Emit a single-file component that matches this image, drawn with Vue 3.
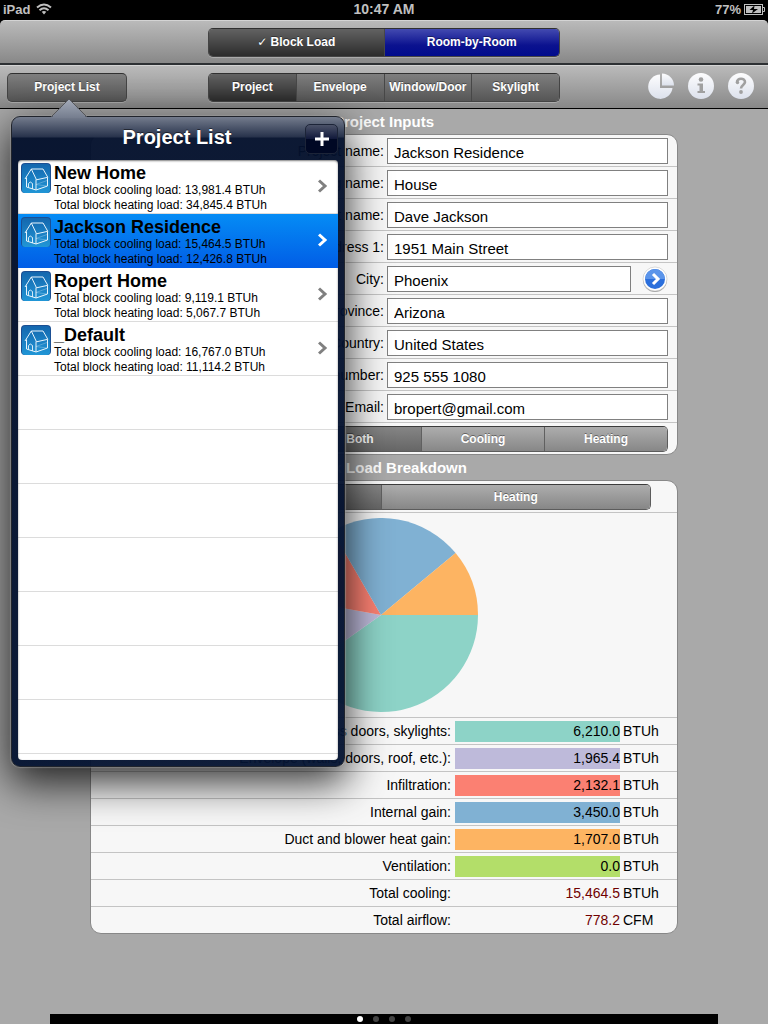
<script setup>
import { ref, computed } from 'vue'

const modes = ["Block Load", "Room-by-Room"]
const mode = ref("Block Load")

const tabs = ["Project", "Envelope", "Window/Door", "Skylight"]
const tab = ref("Project")

const projects = ref([
  {name: "New Home", cooling: "13,981.4", heating: "34,845.4"},
  {name: "Jackson Residence", cooling: "15,464.5", heating: "12,426.8"},
  {name: "Ropert Home", cooling: "9,119.1", heating: "5,067.7"},
  {name: "_Default", cooling: "16,767.0", heating: "11,114.2"},
])
const selected = ref("Jackson Residence")
const showList = ref(true)

const fields = ref([
  {id: "project", label: "Project name:", value: "Jackson Residence"},
  {id: "building", label: "Building name:", value: "House"},
  {id: "client", label: "Client name:", value: "Dave Jackson"},
  {id: "address", label: "Address 1:", value: "1951 Main Street"},
  {id: "city", label: "City:", value: "Phoenix", more: true},
  {id: "state", label: "State/Province:", value: "Arizona"},
  {id: "country", label: "Country:", value: "United States"},
  {id: "phone", label: "Phone number:", value: "925 555 1080"},
  {id: "email", label: "Email:", value: "bropert@gmail.com"},
])

const loadTypes = ["Both", "Cooling", "Heating"]
const loadType = ref("Both")

const charts = ["Cooling", "Heating"]
const chart = ref("Cooling")

const loads = [
  {label: "Windows, glass doors, skylights:", value: 6210, color: "#8dd3c7"},
  {label: "Envelope (walls, doors, roof, etc.):", value: 1965.4, color: "#bebada"},
  {label: "Infiltration:", value: 2132.1, color: "#fb8072"},
  {label: "Internal gain:", value: 3450, color: "#80b1d3"},
  {label: "Duct and blower heat gain:", value: 1707, color: "#fdb462"},
  {label: "Ventilation:", value: 0, color: "#b3de69"},
]

const format = (n) => n.toLocaleString("en-US", {minimumFractionDigits: 1, maximumFractionDigits: 1})

const total = computed(() => loads.reduce((sum, l) => sum + l.value, 0))

// slices run clockwise, starting at 3 o'clock
const slices = computed(() => {
  let angle = 0
  return loads.filter((l) => l.value > 0).map((l) => {
    const start = angle
    angle += l.value / total.value * Math.PI * 2
    const large = angle - start > Math.PI ? 1 : 0
    const point = (a) => `${100 + 100 * Math.cos(a)} ${100 + 100 * Math.sin(a)}`
    return {color: l.color, d: `M100 100 L${point(start)} A100 100 0 ${large} 1 ${point(angle)} Z`}
  })
})
</script>

<template>
  <div class="screen">
    <header class="status">
      <div class="status-left">
        <span>iPad</span>
        <svg width="16" height="12" viewBox="0 0 16 12" fill="none" stroke="#c0c0c0" stroke-width="2">
          <path d="M1 4.500Q8-1.500 15 4.500" />
          <path d="M3.500 7.200Q8 3.200 12.500 7.200" />
          <path d="M5.700 8.800Q8 7 10.300 8.800L8 11.500Z" fill="#c0c0c0" stroke="none" />
        </svg>
      </div>
      <span class="clock">10:47 AM</span>
      <div class="status-right">
        <span>77%</span>
        <svg width="21" height="11" viewBox="0 0 21 11">
          <rect x="0.500" y="0.500" width="18" height="10" fill="none" stroke="#c0c0c0" />
          <rect x="2" y="2" width="15" height="7" fill="#c0c0c0" />
          <path d="M19 3.500h1.500v4h-1.500" fill="none" stroke="#c0c0c0" />
          <path d="M10.500 1.500L5.500 6h3.500l-1 3.500L14 5h-4z" fill="#000" />
        </svg>
      </div>
    </header>

    <nav class="toolbar first">
      <div class="segments dark">
        <button
          v-for="m in modes"
          :key="m"
          :class="{active: mode === m, blue: m === 'Room-by-Room'}"
          @click="mode = m">
          <span v-if="mode === m" class="tick">✓</span> {{ m }}
        </button>
      </div>
    </nav>

    <nav class="toolbar second">
      <button class="list-btn" @click="showList = !showList">Project List</button>
      <div class="segments dark">
        <button v-for="t in tabs" :key="t" :class="{active: tab === t}" @click="tab = t">{{ t }}</button>
      </div>
      <div class="tools">
        <button aria-label="Charts">
          <svg width="28" height="28" viewBox="0 0 28 28" fill="url(#glass)">
            <defs>
              <linearGradient id="glass" x1="0" y1="0" x2="0" y2="1">
                <stop offset="0" stop-color="#fdfdfe" />
                <stop offset="1" stop-color="#dce1ec" />
              </linearGradient>
            </defs>
            <path d="M13 2.500A12.200 12.200 0 1 0 25.500 16H13Z" />
            <path d="M15 1.500A12.300 12.300 0 0 1 27 13.500H15Z" />
          </svg>
        </button>
        <button aria-label="Information">
          <svg width="28" height="28" viewBox="0 0 28 28">
            <circle cx="14" cy="14" r="13" fill="url(#glass)" />
            <circle cx="14" cy="7.500" r="2.300" fill="#a0a0a0" />
            <path d="M10.500 11.500h5.500v7.500h2v2h-7.500v-2h2v-5.500h-2z" fill="#a0a0a0" />
          </svg>
        </button>
        <button aria-label="Help">
          <svg width="28" height="28" viewBox="0 0 28 28">
            <circle cx="14" cy="14" r="13" fill="url(#glass)" />
            <path d="M10 10.500C9.500 5.500 18.300 5.500 18 10.200C17.800 13 14 13 14 16.500" fill="none" stroke="#a0a0a0" stroke-width="2.600" />
            <circle cx="10.500" cy="10.500" r="1.700" fill="#a0a0a0" />
            <circle cx="14" cy="20" r="1.900" fill="#a0a0a0" />
          </svg>
        </button>
      </div>
    </nav>

    <main>
      <h2>Project Inputs</h2>
      <form class="panel" @submit.prevent>
        <div v-for="f in fields" :key="f.id" class="field">
          <label :for="f.id">{{ f.label }}</label>
          <div class="value">
            <input :id="f.id" v-model="f.value" type="text">
            <button v-if="f.more" type="button" class="more" aria-label="Choose city">
              <svg width="26" height="26" viewBox="0 0 26 26">
                <circle cx="13" cy="14" r="12" fill="#000" opacity=".35" />
                <circle cx="13" cy="13" r="12" fill="#fff" stroke="#bbb" stroke-width=".5" />
                <circle cx="13" cy="13" r="10" fill="#2b6fdc" />
                <path d="M3 13a10 10 0 0 1 20 0z" fill="#5c95ea" />
                <path d="M11 8l5 5l-5 5" fill="none" stroke="#fff" stroke-width="3" />
              </svg>
            </button>
          </div>
        </div>
        <div class="load-type">
          <div class="segments">
            <button
              v-for="l in loadTypes"
              :key="l"
              type="button"
              :class="{active: loadType === l}"
              @click="loadType = l">
              {{ l }}
            </button>
          </div>
        </div>
      </form>

      <h2>Block Load Breakdown</h2>
      <section class="panel">
        <div class="chart-type">
          <div class="segments">
            <button v-for="c in charts" :key="c" :class="{active: chart === c}" @click="chart = c">{{ c }}</button>
          </div>
        </div>
        <div class="chart">
          <svg class="pie" viewBox="0 0 200 200">
            <path v-for="s in slices" :key="s.color" :d="s.d" :fill="s.color" />
          </svg>
        </div>
        <table>
          <tbody>
            <tr v-for="l in loads" :key="l.label">
              <th scope="row">{{ l.label }}</th>
              <td class="amount"><span class="bar" :style="{background: l.color}">{{ format(l.value) }}</span></td>
              <td class="unit">BTUh</td>
            </tr>
            <tr class="total">
              <th scope="row">Total cooling:</th>
              <td class="amount"><span class="bar">{{ format(total) }}</span></td>
              <td class="unit">BTUh</td>
            </tr>
            <tr class="total">
              <th scope="row">Total airflow:</th>
              <td class="amount"><span class="bar">778.2</span></td>
              <td class="unit">CFM</td>
            </tr>
          </tbody>
        </table>
      </section>
    </main>

    <footer>
      <span v-for="n in 4" :key="n" class="dot" :class="{on: n === 1}"></span>
    </footer>

    <aside v-if="showList" class="popover">
      <svg class="arrow" width="38" height="20" viewBox="0 0 38 20">
        <defs>
          <linearGradient id="tip" x1="0" y1="0" x2="0" y2="1">
            <stop offset="0" stop-color="#a4abb9" />
            <stop offset="1" stop-color="#757d8e" />
          </linearGradient>
        </defs>
        <path d="M1 20L19 1L37 20Z" fill="url(#tip)" />
        <path d="M1 19L19 1L37 19" fill="none" stroke="#55565a" />
      </svg>
      <div class="popover-head">
        <h1>Project List</h1>
        <button class="add" aria-label="Add project">
          <svg width="14" height="14" viewBox="0 0 14 14" stroke="#fff" stroke-width="3">
            <path d="M7 0v14M0 7h14" />
          </svg>
        </button>
      </div>
      <ul>
        <li v-for="p in projects" :key="p.name">
          <button class="project" :class="{selected: selected === p.name}" @click="selected = p.name">
            <svg class="house" width="30" height="30" viewBox="0 0 30 30">
              <defs>
                <linearGradient id="sky" x1="0" y1="0" x2="0" y2="1">
                  <stop offset="0" stop-color="#1467ae" />
                  <stop offset="1" stop-color="#2196d6" />
                </linearGradient>
              </defs>
              <rect width="30" height="30" rx="4" fill="#1b4f93" />
              <rect x="1" y="1" width="28" height="29" rx="3" fill="url(#sky)" />
              <g fill="none" stroke="#e8f4fc" stroke-linejoin="round">
                <path d="M4 16L10.300 6L22 6L26.800 14.300L15.500 16.800L10.300 6" />
                <path d="M5.500 14.500v9.500L15 27V16.500M15 27L26.500 23V14.500" />
                <path d="M7.500 24.500v-4q1.500-3 4 0v5.500" stroke-width=".9" />
                <path d="M15 21.500l11-4M15 21.500l11 1.500" stroke-width=".7" opacity=".4" />
              </g>
            </svg>
            <span class="info">
              <strong>{{ p.name }}</strong>
              <span>Total block cooling load: {{ p.cooling }} BTUh</span>
              <span>Total block heating load: {{ p.heating }} BTUh</span>
            </span>
            <svg class="chevron" width="10" height="14" viewBox="0 0 10 14" fill="none" stroke="currentColor" stroke-width="3">
              <path d="M1 1.500L7 7L1 12.500" />
            </svg>
          </button>
        </li>
      </ul>
    </aside>
  </div>
</template>

<style>
body {
  margin: 0;
  background: #000;
}
</style>

<style scoped>
.screen {
  position: relative;
  display: flex;
  flex-direction: column;
  min-height: 100vh;
  overflow: hidden;
  font-family: "Liberation Sans", Arial, Helvetica, sans-serif;
  font-size: 14px;
  color: #000;
}

button {
  border: none;
  padding: 0;
  background: none;
  font-family: inherit;
  color: inherit;
  cursor: pointer;
}

svg {
  display: block;
}

h1,
h2,
ul {
  margin: 0;
  padding: 0;
}

.status {
  display: grid;
  grid-template-columns: 1fr auto 1fr;
  align-items: center;
  height: 20px;
  padding: 0 3px;
  font-size: 13px;
  font-weight: bold;
  color: #c0c0c0;
}

.clock {
  font-size: 14px;
  line-height: 18px;
  padding-bottom: 2px;
}

.status-left,
.status-right {
  display: flex;
  align-items: center;
  gap: 6px;
  padding-bottom: 2px;
}

.status-right {
  justify-content: flex-end;
  gap: 3px;
}

.toolbar {
  display: grid;
  grid-template-columns: 1fr 352px 1fr;
  align-items: center;
  box-sizing: border-box;
  height: 44px;
  padding: 0 7px;
  border-top: 1px solid #d4d4d4;
  background: linear-gradient(#bababa, #888);
}

.first {
  height: 45px;
  border-bottom: 2px solid #2d3033;
  border-radius: 5px 5px 0 0;
}

.first .segments {
  grid-column: 2;
}

.second {
  border-bottom: 1px solid #000;
}

.segments {
  display: flex;
  box-sizing: border-box;
  height: 26px;
  border: 1px solid #5c5c5c;
  border-top-color: #3c3c3c;
  border-radius: 5px;
  overflow: hidden;
}

.segments button {
  flex: 1;
  background: linear-gradient(#adadad, #878787);
  color: #fff;
  font-size: 12px;
  font-weight: bold;
  white-space: nowrap;
  text-shadow: 0 -1px 0 rgba(0, 0, 0, 0.4);
}

.segments button + button {
  border-left: 1px solid #606060;
}

.segments .active {
  background: linear-gradient(#858585, #666);
}

.dark,
.list-btn {
  height: 29px;
  border: 1px solid #444;
  border-top-color: #303030;
  box-shadow: 0 1px 0 rgba(255, 255, 255, 0.25);
}

.dark button,
.list-btn {
  background: linear-gradient(#7e7e7e, #565656);
}

.dark button + button {
  border-left-color: #474747;
}

.dark .active {
  background: linear-gradient(#626262, #2c2c2c);
}

.dark .blue {
  background: linear-gradient(#434ab0, #0b128f 60%, #000b8c);
}

.tick {
  font-family: "DejaVu Sans", sans-serif;
  font-size: 12px;
  line-height: 12px;
}

.list-btn {
  width: 120px;
  border-radius: 5px;
  color: #fff;
  font-size: 12px;
  font-weight: bold;
  text-shadow: 0 -1px 0 rgba(0, 0, 0, 0.4);
}

.tools {
  display: flex;
  justify-content: flex-end;
  gap: 12px;
  padding: 0 6px 2px 0;
}

main {
  flex: 1;
  padding: 0 90px;
  background: #a9a9a9;
}

h2 {
  height: 25px;
  line-height: 26px;
  font-size: 15px;
  color: #fff;
  text-align: center;
}

.panel {
  border: 1px solid #888;
  border-radius: 11px;
  background: #f7f7f7;
  overflow: hidden;
}

.field {
  display: grid;
  grid-template-columns: 50% 1fr;
  align-items: center;
  gap: 3px;
  box-sizing: border-box;
  height: 32px;
  border-bottom: 1px solid #c4c4c4;
}

.field label {
  text-align: right;
}

.value {
  display: flex;
  align-items: center;
  gap: 11px;
  padding-right: 9px;
}

.value input {
  flex: 1;
  min-width: 0;
  box-sizing: border-box;
  height: 26px;
  padding: 3px 6px 0;
  border: 1px solid #808080;
  background: #fff;
  font-family: inherit;
  font-size: 15px;
  color: #000;
}

.load-type {
  display: flex;
  justify-content: flex-end;
  padding: 3px 9px 2px;
}

.load-type .segments {
  width: 370px;
}

.chart-type {
  padding: 3px 26px 2px 20px;
  border-bottom: 1px solid #c4c4c4;
}

.chart {
  display: flex;
  justify-content: center;
  padding: 5px 26px 5px 20px;
  border-bottom: 1px solid #c4c4c4;
}

.pie {
  width: 194px;
  height: 194px;
}

table {
  width: 100%;
  border-collapse: collapse;
}

tr + tr {
  border-top: 1px solid #c4c4c4;
}

th,
td {
  height: 26px;
  padding: 0;
}

th {
  padding-right: 4px;
  font-weight: normal;
  text-align: right;
}

.amount {
  width: 165px;
  text-align: right;
}

.bar {
  display: block;
  height: 21px;
  line-height: 21px;
}

.unit {
  width: 54px;
  padding-left: 3px;
}

.total .bar {
  color: #700000;
}

footer {
  display: flex;
  justify-content: center;
  align-items: center;
  gap: 10px;
  height: 10px;
  border: solid #a9a9a9;
  border-width: 0 50px;
}

.dot {
  width: 6px;
  height: 6px;
  border-radius: 50%;
  background: #444;
}

.on {
  background: #fff;
}

.popover {
  position: absolute;
  left: 11px;
  top: 116px;
  box-sizing: border-box;
  width: 334px;
  padding: 0 6px 6px;
  border: 1px solid #20242c;
  border-radius: 9px;
  background: linear-gradient(#747c8d, #27324b 20px, rgba(3, 16, 44, 0.96) 21px, rgba(5, 20, 50, 0.96));
  box-shadow: 0 0 1px 1px rgba(160, 160, 160, 0.5), 0 14px 40px 2px rgba(0, 0, 0, 0.8);
}

.arrow {
  position: absolute;
  left: 38px;
  top: -19px;
}

.popover-head {
  display: grid;
  grid-template-columns: 33px 1fr 33px;
  align-items: center;
  height: 43px;
}

h1 {
  grid-column: 2;
  padding: 0 2px 2px 0;
  font-size: 20px;
  color: #fff;
  text-align: center;
  text-shadow: 0 -1px 0 rgba(0, 0, 0, 0.5);
}

.add {
  display: grid;
  place-items: center;
  width: 33px;
  height: 30px;
  border: 1px solid #1c2438;
  border-radius: 5px;
  background: linear-gradient(#4b5268, #10183a 50%, #000824 50%);
}

ul {
  height: 600px;
  border-radius: 4px;
  background: repeating-linear-gradient(#fff 0 53px, #dcdcdc 53px 54px);
  list-style: none;
  overflow: hidden;
  box-shadow: inset 0 1px 2px rgba(0, 0, 0, 0.5);
}

.project {
  display: flex;
  align-items: flex-start;
  gap: 3px;
  box-sizing: border-box;
  width: 100%;
  height: 54px;
  padding: 3px 10px 0 3px;
  text-align: left;
}

.selected {
  background: linear-gradient(#058cf5, #015de6);
}

.info {
  display: flex;
  flex: 1;
  flex-direction: column;
  font-size: 12px;
  line-height: 15px;
}

.info strong {
  font-size: 18px;
  line-height: 20px;
}

.chevron {
  margin-top: 16px;
  color: #808080;
}

.selected .chevron {
  color: #fff;
}
</style>
